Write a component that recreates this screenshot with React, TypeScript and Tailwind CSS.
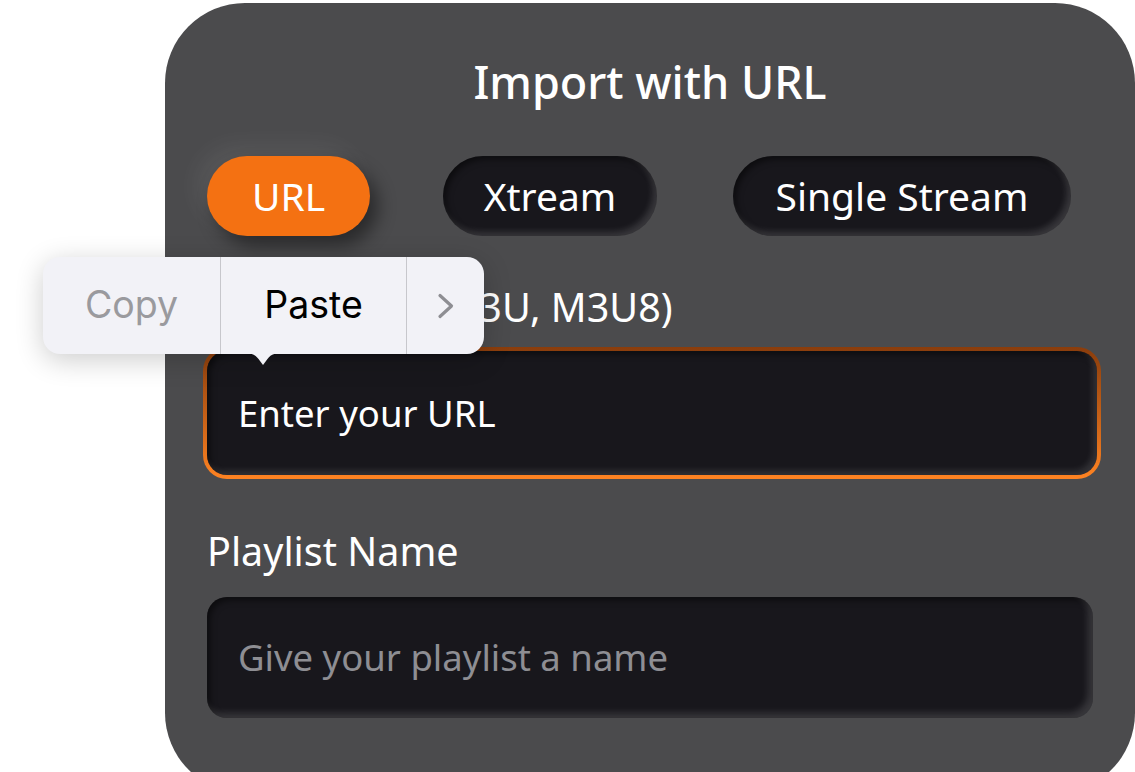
import React from "react";

const font = { fontFamily: '"Noto Sans", "Open Sans", sans-serif' };

const ImportCard = () => {
  return (
    <div
      className="ml-[165px] mt-[3px] w-[970px] h-[790px] rounded-[80px] bg-[#4b4b4d] pt-[49px] pl-[42px] text-white"
      style={font}
    >
      <h1 className="text-center -ml-[42px] text-[45px] leading-[60px] font-medium">
        Import with URL
      </h1>

      {/* source tabs */}
      <div className="mt-[44px] flex items-center h-[80px]">
        <button className="w-[163px] h-[80px] rounded-full bg-[#f47112] text-[39px] shadow-[8px_10px_18px_rgba(0,0,0,0.45),-10px_-10px_24px_rgba(255,255,255,0.07)]">
          URL
        </button>
        <button className="ml-[73px] w-[214px] h-[80px] rounded-full bg-[#18171c] text-[39px] shadow-[inset_-4px_-4px_6px_rgba(255,255,255,0.14),inset_3px_3px_6px_rgba(0,0,0,0.5)]">
          Xtream
        </button>
        <button className="ml-[76px] w-[338px] h-[80px] rounded-full bg-[#18171c] text-[39px] shadow-[inset_-4px_-4px_6px_rgba(255,255,255,0.14),inset_3px_3px_6px_rgba(0,0,0,0.5)]">
          Single Stream
        </button>
      </div>

      <div className="mt-[51px] text-[39.5px] leading-[40px]">Playlist URL (M3U, M3U8)</div>
      <div className="mt-[20px] -ml-[4px] w-[898px] h-[132px] rounded-[24px] p-[4px] bg-gradient-to-b from-[#8a3d0c] to-[#ff8322]">
        <div className="w-full h-full rounded-[20px] bg-[#18171c] flex items-center pl-[31px] text-[36.5px] shadow-[inset_-4px_-4px_6px_rgba(255,255,255,0.12),inset_3px_3px_6px_rgba(0,0,0,0.5)]">
          Enter your URL
        </div>
      </div>

      <div className="mt-[52px] text-[39.5px] leading-[40px]">Playlist Name</div>
      <div className="mt-[26px] w-[886px] h-[121px] rounded-[20px] bg-[#18171c] flex items-center pl-[31px] text-[36.5px] text-[#8e8e93] shadow-[inset_-5px_-5px_7px_rgba(255,255,255,0.14),inset_3px_3px_6px_rgba(0,0,0,0.5)]">
        Give your playlist a name
      </div>
    </div>
  );
};

const EditMenu = () => {
  return (
    <div className="absolute left-[43px] top-[257px] w-[441px] h-[97px]">
      <div
        className="w-full h-full rounded-[17px] bg-[#f2f2f7] flex shadow-[0_6px_28px_rgba(0,0,0,0.2)] text-[37.5px]"
        style={{ fontFamily: 'Inter, "Noto Sans", sans-serif' }}
      >
        <div className="w-[177px] flex items-center justify-center text-[#9a9a9e]">Copy</div>
        <div className="w-px bg-[#c7c7cc]" />
        <div className="w-[185px] flex items-center justify-center text-black">Paste</div>
        <div className="w-px bg-[#c7c7cc]" />
        <div className="flex-1 flex items-center justify-center">
          <svg width="18" height="26" viewBox="0 0 18 26" fill="none">
            <path d="M3 2.5 L14.5 13 L3 23.5" stroke="#8e8e93" strokeWidth="3.2" strokeLinecap="round" strokeLinejoin="round" />
          </svg>
        </div>
      </div>
      <svg className="absolute left-[200px] top-[96px]" width="40" height="20" viewBox="0 0 40 20">
        <path d="M0 0 C10 0 13 2 17 8 L20 12 L23 8 C27 2 30 0 40 0 Z" fill="#f2f2f7" />
      </svg>
    </div>
  );
};

export default function App() {
  return (
    <div className="relative w-[1135px] h-[772px] bg-white overflow-hidden">
      <ImportCard />
      <EditMenu />
    </div>
  );
}
